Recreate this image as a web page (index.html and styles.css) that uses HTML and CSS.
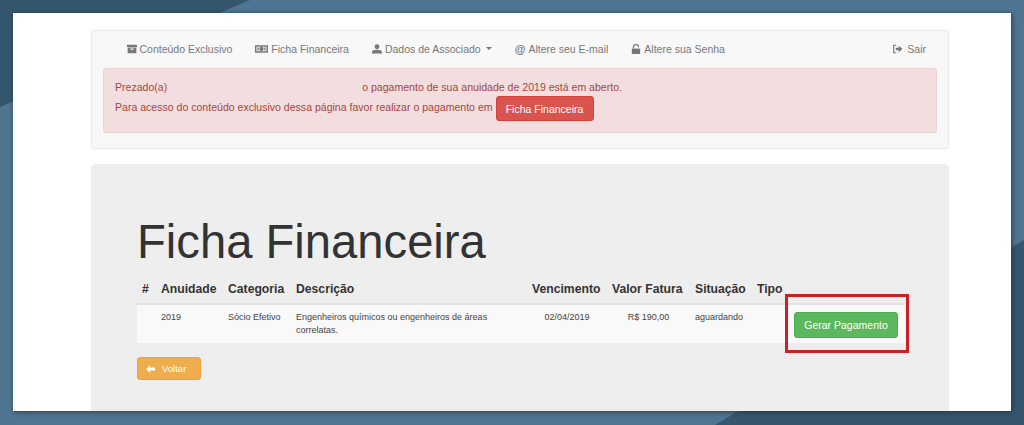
FILE: index.html
```html
<!DOCTYPE html>
<html lang="pt-BR">
<head>
<meta charset="utf-8">
<title>Ficha Financeira</title>
<link rel="stylesheet" href="styles.css">
</head>
<body>
<svg class="backdrop" viewBox="0 0 1024 425" preserveAspectRatio="none" aria-hidden="true">
  <rect width="1024" height="425" fill="#4f7592"/>
  <polygon points="0,0 250,0 0,107" fill="#36566e"/>
  <polygon points="1024,240 1024,425 715,425" fill="#36566e"/>
</svg>
<main class="sheet">
  <section class="topbox">
    <nav class="nav">
      <a class="nav-link"><svg class="ico" viewBox="0 0 12 12"><path d="M0 1h12v2.500H0zM.8 4.200h10.400V11H.8z M4 5.500v1.300h4V5.500z" fill-rule="evenodd" fill="#777"/></svg>Conteúdo Exclusivo</a>
      <a class="nav-link"><svg class="ico ico-wide" viewBox="0 0 14 10"><path d="M0 1h14v8H0zM1.500 2.500v5h11v-5z" fill-rule="evenodd" fill="#777"/><circle cx="7" cy="5" r="2.300" fill="#777"/><path d="M2.500 3.500h1.500v3H2.500zM10 3.500h1.500v3H10z" fill="#777"/></svg>Ficha Financeira</a>
      <a class="nav-link"><svg class="ico" viewBox="0 0 12 12"><circle cx="6" cy="3.300" r="2.900" fill="#777"/><path d="M0 11.500V9.300C0 7.800 2.500 6.800 6 6.800s6 1 6 2.500v2.200z" fill="#777"/></svg>Dados de Associado<span class="caret"></span></a>
      <a class="nav-link"><span class="at">@</span>Altere seu E-mail</a>
      <a class="nav-link"><svg class="ico" viewBox="0 0 12 12"><path d="M1 5.500h10V12H1z" fill="#777"/><path d="M3 5.500V3.300a3 2.500 0 0 1 6 0v.5" fill="none" stroke="#777" stroke-width="1.500"/></svg>Altere sua Senha</a>
      <a class="nav-link nav-end"><svg class="ico ico-exit" viewBox="0 0 12 12"><path d="M4.500 1.500H1.500v9h3" fill="none" stroke="#777" stroke-width="1.400"/><path d="M4 4.500h3.500V2L12 6l-4.500 4V7.500H4z" fill="#777"/></svg>Sair</a>
    </nav>
    <div class="alert">
      <p class="alert-line">Prezado(a)<span class="redacted"></span>o pagamento de sua anuidade de 2019 está em aberto.</p>
      <p class="alert-line">Para acesso do conteúdo exclusivo dessa página favor realizar o pagamento em <a class="btn btn-red">Ficha Financeira</a></p>
    </div>
  </section>
  <section class="jumbo">
    <h1 class="title">Ficha Financeira</h1>
    <table class="grid">
      <colgroup>
        <col class="c1"><col class="c2"><col class="c3"><col class="c4"><col class="c5"><col class="c6"><col class="c7"><col class="c8"><col class="c9">
      </colgroup>
      <thead>
        <tr>
          <th>#</th><th>Anuidade</th><th>Categoria</th><th>Descrição</th><th>Vencimento</th><th>Valor Fatura</th><th>Situação</th><th>Tipo</th><th></th>
        </tr>
      </thead>
      <tbody>
        <tr>
          <td></td>
          <td>2019</td>
          <td>Sócio Efetivo</td>
          <td>Engenheiros químicos ou engenheiros de áreas correlatas.</td>
          <td class="center">02/04/2019</td>
          <td class="center">R$ 190,00</td>
          <td>aguardando</td>
          <td></td>
          <td class="action"><a class="btn btn-green">Gerar Pagamento</a><span class="highlight"></span></td>
        </tr>
      </tbody>
    </table>
    <a class="btn btn-orange"><svg class="ico-back" viewBox="0 0 10 9"><path d="M0 4.500L4.500 0v2.800H10v3.400H4.500V9z" fill="#fff"/></svg>Voltar</a>
  </section>
</main>
</body>
</html>
```
FILE: styles.css
```css
* { box-sizing: border-box; }
html, body { margin: 0; height: 425px; overflow: hidden; }
body { position: relative; padding: 13px 13px 14px; font-family: "Liberation Sans", Arial, sans-serif; }
.backdrop { position: absolute; left: 0; top: 0; width: 1024px; height: 425px; }
.sheet { position: relative; height: 398px; padding: 17px 62px 0 78px; background: #fff; box-shadow: 1px 1px 5px rgba(20, 40, 55, .7); }
.topbox { height: 119px; background: #f8f8f8; border: 1px solid #e9e9e9; border-radius: 3px; }
.nav { display: flex; align-items: center; height: 37px; padding: 0 10.500px 2px 23px; }
.nav-link { display: flex; align-items: center; padding: 0 11.500px; font-size: 10.500px; color: #777; white-space: nowrap; }
.nav-end { margin-left: auto; }
.ico { width: 10px; height: 10px; margin-right: 3px; flex: none; }
.ico-wide { width: 13px; }
.ico-exit { width: 11px; margin-right: 4px; }
.at { font-weight: bold; font-size: 11px; margin-right: 3px; }
.caret { width: 0; height: 0; margin-left: 5px; border-top: 3px solid #777; border-left: 3px solid transparent; border-right: 3px solid transparent; }
.alert { height: 65px; margin: 0 11px; padding: 11px; background: #f2dede; border: 1px solid #eed3d6; border-radius: 3px; color: #a94442; font-size: 10.550px; }
.alert-line { margin: 0; height: 16px; line-height: 14px; white-space: pre-wrap; }
.alert-line + .alert-line { display: flex; align-items: flex-start; height: 25px; line-height: 22px; }
.redacted { display: inline-block; width: 195px; }
.btn { display: inline-flex; align-items: center; justify-content: center; border-radius: 3px; color: #fff; font-size: 10.500px; white-space: nowrap; }
.btn-red { width: 98px; height: 25px; background: #d9534f; border: 1px solid #d43f3a; }
.btn-green { width: 104px; height: 26px; background: #5cb85c; border: 1px solid #4cae4c; }
.btn-orange { justify-content: flex-start; width: 64px; height: 23px; padding-left: 8px; background: #f0ad4e; border: 1px solid #eea236; font-size: 9.500px; }
.ico-back { width: 9px; height: 8px; margin-right: 7px; }
.jumbo { height: 247px; margin-top: 15px; padding: 47px 46px 0; background: #eee; border-radius: 5px 5px 0 0; }
.title { margin: 0 0 5px; font-size: 47.200px; line-height: 61px; font-weight: 400; color: #333; white-space: nowrap; }
.grid { width: 768px; table-layout: fixed; border-collapse: collapse; margin-bottom: 14px; color: #333; }
.c1 { width: 19px; } .c2 { width: 67px; } .c3 { width: 68px; } .c4 { width: 236px; } .c5 { width: 80px; }
.c6 { width: 83px; } .c7 { width: 62px; } .c8 { width: 37px; } .c9 { width: 116px; }
th { padding: 5px 5px 7px; height: 27px; font-size: 12.200px; text-align: left; white-space: nowrap; vertical-align: bottom; border-bottom: 2px solid #e2e2e2; }
td { padding: 6px 5px; font-size: 9px; line-height: 13px; vertical-align: top; background: #f9f9f9; color: #444; }
.center { text-align: center; }
.action { position: relative; padding-top: 7px; padding-bottom: 0; }
.highlight { position: absolute; left: -4px; top: -11px; width: 124px; height: 59px; border: 3px solid #cc2027; }
```
